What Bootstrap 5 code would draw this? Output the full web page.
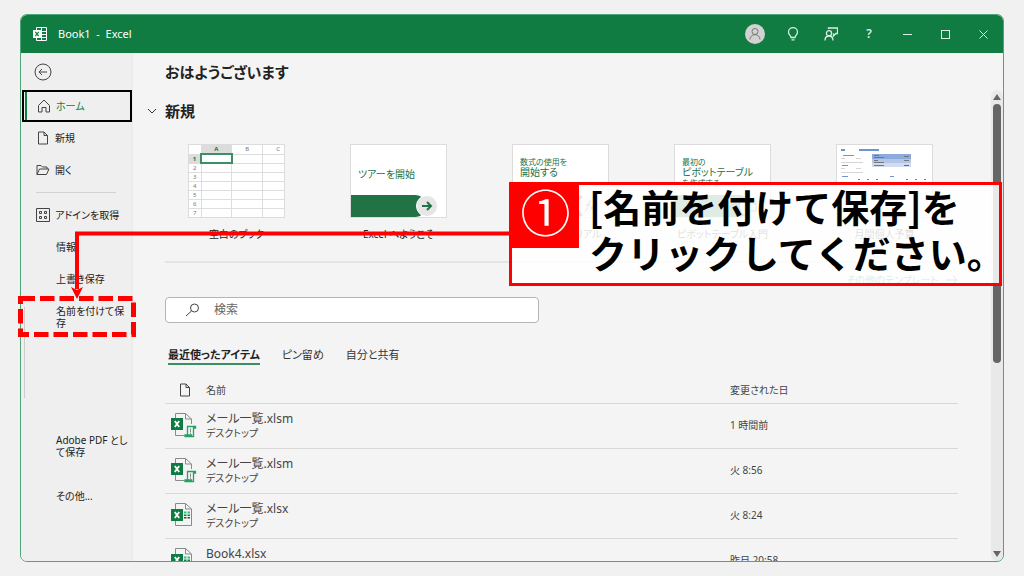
<!DOCTYPE html>
<html lang="ja">
<head>
<meta charset="utf-8">
<meta name="viewport" content="width=device-width, initial-scale=1">
<title>Book1 - Excel</title>
<link href="https://cdn.jsdelivr.net/npm/bootstrap@5.3.0/dist/css/bootstrap.min.css" rel="stylesheet">
<style>
  :root { --xl-green: #107c41; --xl-edge: #4fa577; --ink: #333; --alert: #f00; }
  body { background: #f1f1f1; color: var(--ink); font: 11px/16px "Noto Sans", "Noto Sans CJK JP", sans-serif; font-feature-settings: "palt"; padding: 14px 20px; }
  a { color: inherit; text-decoration: none; }
  svg { display: block; flex: none; fill: none; stroke: currentColor; }
  .app-window { border: 1px solid var(--xl-edge); border-radius: 7px; background: #f4f4f4; }
  .titlebar { height: 38px; background: var(--xl-green); color: #fff; padding: 0 1px 0 12px; }
  .window-title { margin: 0 auto 0 11px; white-space: pre; }
  .titlebar button { width: 38px; height: 38px; padding: 0; border: 0; background: none; color: #d9eee2; font-size: 12px; font-weight: 600; display: flex; align-items: center; justify-content: center; }
  .avatar { width: 20px; height: 20px; border-radius: 50%; background: #d2d2d2; color: #777; }

  .sidebar { width: 112px; background: #efefef; border-right: 2px solid #ececec; font-size: 10px; }
  .back { height: 37px; padding: 0 0 0 13px; border: 0; background: none; color: #444; }
  .side-link { display: flex; align-items: center; gap: 5px; min-height: 32px; padding: 0 0 0 15px; line-height: 12px; color: #222; white-space: nowrap; }
  .side-link svg { color: #444; }
  .side-link.no-icon { padding-left: 35px; }
  .side-link.two-lines { min-height: 44px; }
  .side-link.current { color: var(--xl-green); border: 2px solid #000; padding-left: 13px; margin-left: 1px; margin-right: -1px; box-shadow: inset 1px 0 #efefef, inset 3px 0 var(--xl-green); }
  .side-rule { height: 1px; margin: 6px 15px; background: #d2d2d2; }
  .side-group { padding-bottom: 85px; margin-left: 3px; background: linear-gradient(#ccc, #ccc) 0 12px / 1px 91px no-repeat; }
  .side-group .side-link.no-icon { padding-left: 32px; }
  .side-last { margin-top: 12px; }

  .content { padding: 7px 33px 0 32px; }
  h1, h2 { font-size: 15px; line-height: 24px; font-weight: 700; color: #222; margin: 0; }
  .section-toggle { margin: 15px 0 21px -18px; padding: 0; border: 0; background: none; color: #333; gap: 8px; }
  .templates { padding-left: 23px; gap: 65px; }
  .template { width: 97px; text-align: center; white-space: nowrap; color: #222; font-size: 10px; }
  .thumb { height: 74px; background: #fff; border: 1px solid #dcdcdc; margin-bottom: 8px; overflow: hidden; text-align: left; color: #217346; line-height: 11px; }
  .thumb-body { height: 50px; padding: 12px 7px 0; }
  .thumb-band { height: 22px; background: #217346; width: 75px; border-radius: 0 11px 11px 0; display: flex; justify-content: flex-end; }
  .thumb-band i { width: 22px; height: 22px; flex: none; margin-right: -12px; border-radius: 50%; background: #e6e6e6; display: flex; align-items: center; justify-content: center; border: 1px solid #fff; }
  .t-small { font-size: 8px; line-height: 10px; }
  .sheet { border-collapse: collapse; table-layout: fixed; width: 105px; font-size: 6px; line-height: 8px; color: #777; text-align: center; }
  .sheet th, .sheet td { border: 1px solid #dedede; height: 9px; padding: 0; font-weight: 400; }
  .sheet th:first-child { width: 12px; }
  .sheet tr > :first-child { border-left: 0; } .sheet thead th { border-top: 0; }
  .sheet .on { background: #dcdcdc; color: #217346; font-weight: 700; }
  .sheet .cell { border: 2px solid #3b8f62; }
  .rule { height: 2px; background: #e4e4e4; margin: 19px 0 9px; }
  .more { color: var(--xl-green); font-size: 10px; }
  .search { margin-top: 9px; width: 374px; height: 26px; border: 1px solid #b4b4b4; border-radius: 4px; background: #fff; padding-left: 19px; gap: 14px; color: #444; }
  .search input { border: 0; outline: 0; background: none; padding: 0; font-size: 12px; line-height: 16px; }
  .search input::placeholder { color: #666; opacity: 1; }
  .tabs { margin: 24px 0 12px 3px; gap: 22px; font-size: 11px; }
  .tabs a { border-bottom: 2px solid transparent; }
  .tabs a.picked { font-weight: 700; color: #222; border-color: #3b8f62; }
  .files { width: 100%; table-layout: fixed; border-collapse: collapse; color: #444; }
  .files th { height: 26px; font-weight: 400; font-size: 10px; padding: 0; border-bottom: 1px solid #d8d8d8; }
  .files td { height: 45px; padding: 0 0 1px; border-bottom: 1px solid #d8d8d8; font-size: 10px; vertical-align: middle; }
  .files .c-icon { width: 41px; padding-left: 6px; }
  .files .c-date { width: 228px; }
  .file-name { font-size: 12px; line-height: 16px; } .file-place { line-height: 12px; }

  .scroller { width: 12px; margin-top: 37px; background: #e9e9e9; border-radius: 6px; color: #666; }
  .scroller .bar { height: 55%; width: 8px; border-radius: 4px; background: #666; }

  /* Instruction layer drawn over the window */
  .mark-box { left: 18px; top: 296px; width: 118px; height: 41px; }
  .mark-line { left: 70px; top: 231px; width: 440px; height: 68px; }
  .callout { left: 509px; top: 182px; width: 493px; height: 104px; border: 3px solid var(--alert); background: rgba(255,255,255,.86); color: #000; }
  .step { width: 67px; height: 63px; background: var(--alert); color: #fff; font-size: 50px; line-height: 56px; text-align: center; flex: none; }
  .callout p { margin: -2px 0 0 10px; font: 700 38px/46px "Noto Sans CJK JP", sans-serif; font-feature-settings: normal; white-space: nowrap; }
</style>
</head>
<body class="vh-100 overflow-hidden position-relative">

<svg width="0" height="0" class="position-absolute" aria-hidden="true">
  <defs>
    <symbol id="page" viewBox="0 0 12 14"><path d="M1.500 1h5.500l3.500 3.500V13h-9zM7 1v3.500h3.500"/></symbol>
    <symbol id="xl-macro" viewBox="0 0 26 26"><path d="M4.500 6V1.500h10L20.500 7v5M4.500 18v5.500h9M14.500 1.500V7h6" stroke="#8a8a8a"/><rect x="0" y="6" width="12" height="12" fill="#107c41" stroke="none"/><path d="M3.800 9l4.400 6M8.200 9l-4.400 6" stroke="#fff" stroke-width="1.800"/><path d="M16.500 23V14.500h8v1.500h-2v8.500h-8.500V23h6.500v1.500" stroke="#21a366" stroke-width="1.300" fill="#f4f4f4"/><path d="M19.500 16.500v4M19.500 21v1" stroke="#8a8a8a"/></symbol>
    <symbol id="xl-book" viewBox="0 0 26 26"><path d="M4.500 7V1.500h10L20.500 7v16.500h-16V18M14.500 1.500V7h6" stroke="#8a8a8a"/><rect x="0" y="7" width="12" height="12" fill="#107c41" stroke="none"/><path d="M3.800 10l4.400 6M8.200 10l-4.400 6" stroke="#fff" stroke-width="1.800"/><path d="M13 10.500h2.500M16.500 10.500h2.500" stroke="#33c481" stroke-width="1.800"/><path d="M13 13.200h2.500M16.500 13.200h2.500" stroke="#107c41" stroke-width="1.600"/><path d="M13 15.800h2.500M16.500 15.800h2.500" stroke="#185c37" stroke-width="1.600"/></symbol>
  </defs>
</svg>

<div class="app-window h-100 d-flex flex-column overflow-hidden">
  <header class="titlebar d-flex align-items-center flex-shrink-0">
    <svg width="14" height="14" viewBox="0 0 14 14"><path d="M3.500 3V.5h10v13h-10V11M8.500.5v13M3.500 4.500h10M8 7.500h5.500M3.500 10.500h10"/><rect x="0" y="3" width="8" height="8" fill="#fff" stroke="none"/><path d="M2.300 4.800l3.400 4.400M5.700 4.800L2.300 9.200" stroke="#107c41" stroke-width="1.200"/></svg>
    <span class="window-title">Book1  -  Excel</span>
    <button type="button" aria-label="アカウント"><span class="avatar d-flex align-items-center justify-content-center"><svg width="14" height="14" viewBox="0 0 14 14"><circle cx="7" cy="4.500" r="3"/><path d="M2 12.500c0-6.500 10-6.500 10 0"/></svg></span></button>
    <button type="button" aria-label="ヒント"><svg width="12" height="14" viewBox="0 0 12 14" stroke-width="1.300"><path d="M4 10.500C4 8.500 1.500 8 1.500 5a4.500 4.300 0 0 1 9 0c0 3-2.500 3.500-2.500 5.500zM4.500 12.800h3"/></svg></button>
    <button type="button" aria-label="フィードバック"><svg width="14" height="14" viewBox="0 0 14 14" stroke-width="1.300"><path d="M4.500 2V1h9v5.500H12L9.500 9V6.500M1 13.500c0-6 8-6 8 0"/><circle cx="5" cy="6.300" r="2.600"/></svg></button>
    <button type="button" aria-label="ヘルプ">?</button>
    <button type="button" aria-label="最小化"><svg width="9" height="9" viewBox="0 0 9 9"><path d="M0 4.500h9"/></svg></button>
    <button type="button" aria-label="最大化"><svg width="9" height="9" viewBox="0 0 9 9"><rect x=".5" y=".5" width="8" height="8"/></svg></button>
    <button type="button" aria-label="閉じる"><svg width="9" height="9" viewBox="0 0 9 9"><path d="M.5.5l8 8M8.500.5l-8 8"/></svg></button>
  </header>

  <div class="d-flex flex-grow-1 overflow-hidden">
    <nav class="sidebar d-flex flex-column flex-shrink-0">
      <button type="button" class="back" aria-label="戻る"><svg width="18" height="18" viewBox="0 0 18 18"><circle cx="9" cy="9" r="8"/><path d="M13 9H5M8 6L5 9l3 3"/></svg></button>
      <a href="#" class="side-link current" aria-current="page"><svg width="14" height="14" viewBox="0 0 14 14"><path d="M1.500 6.500L7 1l5.500 5.500V13H9V8.500H5V13H1.500z"/></svg>ホーム</a>
      <a href="#" class="side-link"><svg width="14" height="14"><use href="#page"/></svg>新規</a>
      <a href="#" class="side-link"><svg width="14" height="12" viewBox="0 0 14 12"><path d="M1 10.500v-9h4l1.500 1.500H11v2M1 10.500L3.500 5H13l-2.500 5.500z"/></svg>開く</a>
      <div class="side-rule"></div>
      <a href="#" class="side-link"><svg width="14" height="14" viewBox="0 0 14 14"><path d="M.5.500h13v13H.5zM3.500 3.500h2v2h-2zM8.500 3.500h2v2h-2zM3.500 8.500h2v2h-2zM8.500 8.500h2v2h-2z"/></svg>アドインを取得</a>
      <a href="#" class="side-link no-icon">情報</a>
      <a href="#" class="side-link no-icon">上書き保存</a>
      <div class="side-group"><a href="#" class="side-link no-icon two-lines"><span>名前を付けて保<br>存</span></a></div>
      <a href="#" class="side-link no-icon two-lines"><span>Adobe PDF とし<br>て保存</span></a>
      <a href="#" class="side-link no-icon side-last">その他...</a>
    </nav>

    <main class="content flex-grow-1 overflow-hidden">
      <h1>おはようございます</h1>
      <button type="button" class="section-toggle d-flex align-items-center"><svg width="10" height="8" viewBox="0 0 10 8"><path d="M1 2l4 4 4-4"/></svg><h2>新規</h2></button>

      <div class="templates d-flex">
        <a href="#" class="template"><div class="thumb">
          <table class="sheet"><thead><tr><th></th><th class="on">A</th><th>B</th><th>C</th></tr></thead>
          <tbody><tr><th class="on">1</th><td class="cell"></td><td></td><td></td></tr><tr><th>2</th><td></td><td></td><td></td></tr><tr><th>3</th><td></td><td></td><td></td></tr><tr><th>4</th><td></td><td></td><td></td></tr><tr><th>5</th><td></td><td></td><td></td></tr><tr><th>6</th><td></td><td></td><td></td></tr><tr><th>7</th><td></td><td></td><td></td></tr></tbody></table>
        </div>空白のブック</a>
        <a href="#" class="template"><div class="thumb"><div class="thumb-body pt-4">ツアーを開始</div><div class="thumb-band"><i><svg width="12" height="12" viewBox="0 0 12 12" stroke-width="2"><path d="M1 6h9M6 2l4 4-4 4"/></svg></i></div></div>Excel へようこそ</a>
        <a href="#" class="template"><div class="thumb"><div class="thumb-body"><div class="t-small">数式の使用を</div><div>開始する</div></div><div class="thumb-band"><i><svg width="12" height="12" viewBox="0 0 12 12"><path d="M8 1C4 0 6 11 2 11M3 5h4M7 6l4 4M11 6l-4 4"/></svg></i></div></div>数式チュートリアル</a>
        <a href="#" class="template"><div class="thumb"><div class="thumb-body"><div class="t-small">最初の</div><div>ピボットテーブル</div><div class="t-small">を作成する</div></div><div class="thumb-band"><i><svg width="12" height="12" viewBox="0 0 12 12"><path d="M1 1h10v10H1zM4 1v10M1 4h10"/></svg></i></div></div>ピボットテーブル入門</a>
        <a href="#" class="template"><div class="thumb"><svg width="95" height="72" viewBox="0 0 95 72"><g stroke="none">
          <path fill="#6f93d6" d="M4 4h4v2H4zM22 4h20v2H22zM6 10h11v1H6zM5 20h6v1H5zM5 31h6v1H5zM53 31h4v1h-4z"/>
          <path fill="#8ea9db" d="M35 9h39v5H35z"/><path fill="#b4c6e7" d="M35 14h39v4H35z"/><path fill="#d0dbf0" d="M35 18h39v4H35z"/>
          <path fill="#777" d="M37 10h5v1h-5zM37 12h10v1H37zM37 15h4v1h-4zM37 17h10v1H37zM37 20h10v1H37zM67 11h5v1h-5zM67 15h5v1h-5zM21 34h2v1h-2zM30 34h2v1h-2zM39 34h2v1h-2zM69 34h2v1h-2zM78 34h2v1h-2zM87 34h2v1h-2z"/>
          <path fill="#e33" d="M67 20h5v1h-5z"/>
          <path fill="#d5d5d5" d="M4 13h4v1H4zM19 13h5v1h-5zM4 17h22v1H4zM4 23h4v1H4zM19 23h5v1h-5zM4 27h22v1H4zM4 38h38v1H4zM4 43h38v1H4zM4 48h38v1H4zM53 38h38v1H53zM53 43h38v1H53zM53 48h38v1H53z"/></g></svg></div>月間個人予算</a>
      </div>

      <div class="rule"></div>
      <div class="more d-flex justify-content-end"><a href="#" class="d-flex align-items-center gap-2">その他のテンプレート<svg width="12" height="10" viewBox="0 0 12 10"><path d="M0 5h11M7 1l4 4-4 4"/></svg></a></div>

      <div class="search d-flex align-items-center">
        <svg width="15" height="14" viewBox="0 0 15 14"><circle cx="9.500" cy="5" r="4"/><path d="M6.500 8L1 13"/></svg>
        <input type="search" class="flex-grow-1" placeholder="検索" aria-label="検索">
      </div>

      <div class="tabs d-flex"><a href="#" class="picked">最近使ったアイテム</a><a href="#">ピン留め</a><a href="#">自分と共有</a></div>

      <table class="files">
        <thead><tr><th class="c-icon" scope="col"><svg class="ms-2" width="12" height="14"><use href="#page"/></svg></th><th scope="col">名前</th><th class="c-date" scope="col">変更された日</th></tr></thead>
        <tbody>
          <tr><td class="c-icon"><svg width="26" height="26"><use href="#xl-macro"/></svg></td><td><div class="file-name">メール一覧.xlsm</div><div class="file-place">デスクトップ</div></td><td>1 時間前</td></tr>
          <tr><td class="c-icon"><svg width="26" height="26"><use href="#xl-macro"/></svg></td><td><div class="file-name">メール一覧.xlsm</div><div class="file-place">デスクトップ</div></td><td>火 8:56</td></tr>
          <tr><td class="c-icon"><svg width="26" height="26"><use href="#xl-book"/></svg></td><td><div class="file-name">メール一覧.xlsx</div><div class="file-place">デスクトップ</div></td><td>火 8:24</td></tr>
          <tr><td class="c-icon"><svg width="26" height="26"><use href="#xl-book"/></svg></td><td><div class="file-name">Book4.xlsx</div><div class="file-place">&nbsp;</div></td><td>昨日 20:58</td></tr>
        </tbody>
      </table>
    </main>

    <div class="scroller d-flex flex-column align-items-center flex-shrink-0" aria-hidden="true">
      <svg class="my-1" width="8" height="6" viewBox="0 0 8 6"><path d="M4 0l4 6H0z" fill="currentColor" stroke="none"/></svg>
      <div class="bar"></div>
      <svg class="mt-auto mb-1" width="8" height="6" viewBox="0 0 8 6"><path d="M0 0h8L4 6z" fill="currentColor" stroke="none"/></svg>
    </div>
  </div>
</div>

<svg class="mark-line position-absolute" viewBox="0 0 440 68" aria-hidden="true"><path d="M440 2.500H7V58" stroke="#f00" stroke-width="4"/><path d="M1 56l6 3 6-3-6 12z" fill="#f00" stroke="none"/></svg>
<svg class="mark-box position-absolute" viewBox="0 0 118 41" aria-hidden="true"><rect x="2.500" y="2.500" width="113" height="36" stroke="#f00" stroke-width="5" stroke-dasharray="14.500 5"/></svg>
<div class="callout position-absolute d-flex align-items-start">
  <div class="step">①</div>
  <p>[名前を付けて保存]を<br>クリックしてください。</p>
</div>
<script src="https://cdn.jsdelivr.net/npm/bootstrap@5.3.0/dist/js/bootstrap.bundle.min.js"></script>
</body>
</html>
